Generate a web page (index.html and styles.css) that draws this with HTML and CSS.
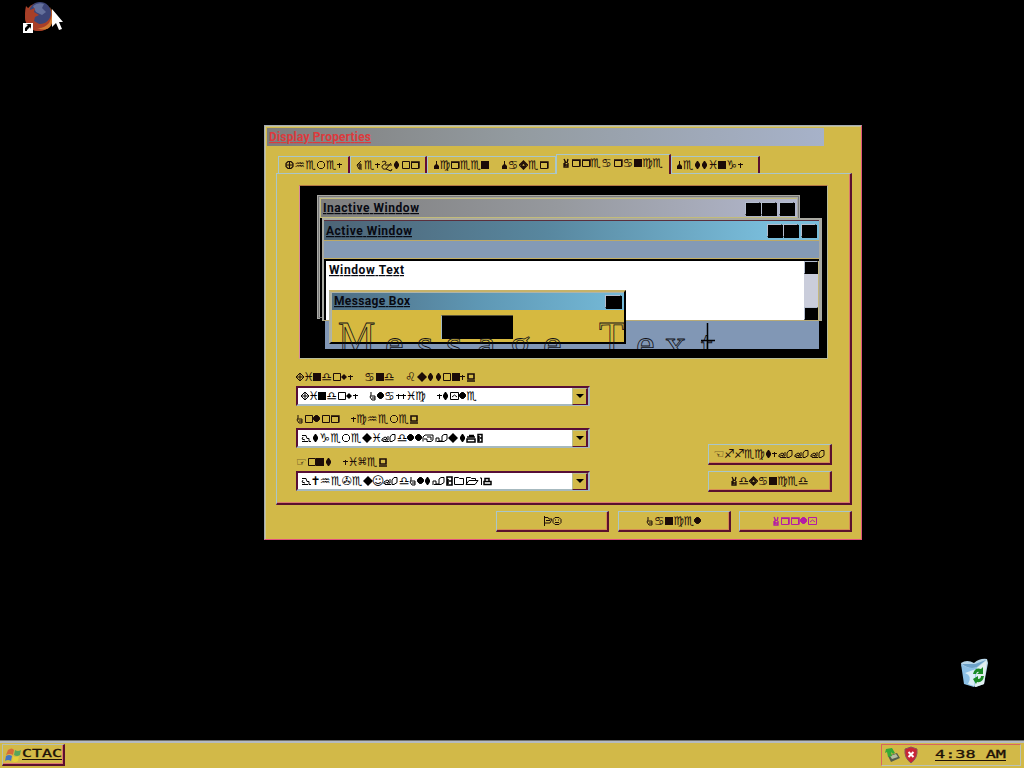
FILE: index.html
```html
<!DOCTYPE html>
<html lang="en">
<head>
<meta charset="utf-8">
<title>Desktop</title>
<link rel="stylesheet" href="styles.css">
</head>
<body>
<main class="desktop">
  <svg class="firefox" width="42" height="36" viewBox="0 0 42 36">
    <circle cx="17" cy="17" r="14" fill="#a94624"/>
    <circle cx="18" cy="13" r="11" fill="#3c4577"/>
    <path d="M11 6q5-4 11-2l-2 4 4 4-4 3-6-3z" fill="#64709c"/>
    <path d="M4 6l4 4 5-2-1 4 5 3-4 2-1 4 5 3q8 2 13-9 2 12-8 15-13 4-18-8-2-8 0-16z" fill="#a83f28"/>
    <path d="M28 7q4 8-1 16-5 6-12 5 15 6 16-11 0-6-3-10z" fill="#cf7a32"/>
    <path d="M1 23h10v10H1z" fill="#fff"/>
    <path d="M3 31v-3l3-3-2-1h5v5l-1-2-3 3v1z" fill="#000"/>
    <path d="M30 9v18l4-4 3 7 3-1-3-7h4z" fill="#fff"/>
  </svg>

  <section class="dialog">
    <header class="titlebar"><svg class="cap red" width="110" height="18"><text x="2" y="13" textLength="102">Display Properties</text></svg></header>
    <nav class="tabs">
      <div class="tab t1"><span class="sym" data-s="Themes"></span></div>
      <div class="tab t2"><span class="sym" data-s="Desktop"></span></div>
      <div class="tab t3"><span class="sym" data-s="Screen Saver"></span></div>
      <div class="tab t4"><span class="sym" data-s="Appearance"></span></div>
      <div class="tab t5"><span class="sym" data-s="Settings"></span></div>
    </nav>
    <div class="panel">
      <div class="preview">
        <div class="win inactive"><div class="bar"><svg class="cap" width="120" height="18"><text x="2" y="13" textLength="96">Inactive Window</text></svg><div class="boxes"><i></i><i></i><i></i></div></div></div>
        <div class="win active">
          <div class="bar"><svg class="cap" width="120" height="18"><text x="2" y="13" textLength="86">Active Window</text></svg><div class="boxes"><i></i><i></i><i></i></div></div>
          <div class="menu"></div>
          <div class="client"><svg class="cap" width="120" height="20"><text x="3" y="14" textLength="75">Window Text</text></svg><div class="scroll"><i></i><i></i></div></div>
        </div>
        <div class="below"></div>
        <div class="win message">
          <div class="bar"><svg class="cap" width="120" height="17"><text x="2" y="12" textLength="76">Message Box</text></svg><div class="boxes"><i></i></div></div>
          <div class="msgbody"><b></b></div>
        </div>
        <svg class="big" width="492" height="29"><text x="10" y="31">M</text><text x="57 89 118 149 182 215" y="38">essage</text><text x="271" y="31">T</text><text x="308 337" y="38">ex</text><text x="373" y="40">t</text><path d="M379.500 3v27M373 20.500h14"/></svg>
      </div>
      <div class="lower">
        <div class="fields">
          <label><span class="sym" data-s="Windows and Buttons:"></span></label>
          <div class="select"><span class="sym" data-s="Windows Classic style"></span><em></em></div>
          <label><span class="sym" data-s="Color scheme:"></span></label>
          <div class="select"><span class="sym" data-s="@tgemeui.dll,-ut8"></span><em></em></div>
          <label class="last"><span class="sym" data-s="Font size:"></span></label>
          <div class="select"><span class="sym" data-s="@UheVeuJ.dClt-2/016"></span><em></em></div>
        </div>
        <div class="side">
          <div class="btn"><span class="sym" data-s="Effects..."></span></div>
          <div class="btn"><span class="sym" data-s="Advanced"></span></div>
        </div>
      </div>
    </div>
    <footer class="actions">
      <div class="btn"><span class="sym" data-s="OK"></span></div>
      <div class="btn"><span class="sym" data-s="Cancel"></span></div>
      <div class="btn apply"><span class="sym" data-s="Apply"></span></div>
    </footer>
  </section>

  <svg class="bin" width="30" height="32" viewBox="0 0 30 32">
    <path d="M2 6q6-4 13 0 6-5 13-4l1 4-4 21-8 3-10-3z" fill="#b7d6e9"/>
    <path d="M3 7q8 6 15 3l9-7-11 4z" fill="#6da2c9"/>
    <path d="M2 7l3 20 10 3 3-20q-8 3-16-3z" fill="#8cc0e6"/>
    <path d="M6 16q8 3 3 11l6 2 2-17z" fill="#d9edf7"/>
    <path d="M18 11l10-8-3 24-9 3z" fill="#e2eff1"/>
    <path d="M14 17q2-7 8-5l2-2v7h-6l2-2q-2-1-3 2zM25 19q-1 7-7 6l-1 2-3-5 5-3v3q3 0 3-3z" fill="#198b25"/>
  </svg>
</main>
<footer class="taskbar">
  <div class="start">
    <svg width="17" height="18" viewBox="0 0 17 18"><path d="M3 4q4-3 6 0L8 9q-3-2-7 0z" fill="#d56c39"/><path d="M10 4q3 2 6 0l-1 5q-3 2-6 0z" fill="#58a55a"/><path d="M1 10q3-2 6 0l-1 5q-3-2-6 0z" fill="#4674c2"/><path d="M8 10q3 2 6 0l-1 5q-3 2-6 0z" fill="#e4cf3a"/></svg>
    <svg class="term" width="42" height="18"><text x="0" y="11" textLength="40" lengthAdjust="spacingAndGlyphs">CTAC</text><path d="M0 13.500h40"/></svg>
  </div>
  <div class="tray">
    <svg width="16" height="18" viewBox="0 0 16 18"><path d="M3 10l9-3 3 5-9 4z" fill="#545d4b"/><path d="M5 10l6-2 2 3-6 2z" fill="#b4bda0"/><path d="M1 3l6-1 3 5-2 1-2-2 1 4-4 1-1-5-2 1z" fill="#36a936"/></svg>
    <svg width="16" height="18" viewBox="0 0 16 18"><path d="M8 1l6 2q1 9-6 14-7-5-6-14z" fill="#c92537" stroke="#8b5558"/><path d="M5.500 6l5 5m0-5l-5 5" stroke="#fff" stroke-width="2"/></svg>
    <svg class="term clock" width="74" height="18"><text x="0" y="12" textLength="71" lengthAdjust="spacingAndGlyphs" xml:space="preserve">4:38 AM</text><path d="M0 14.500h71"/></svg>
  </div>
</footer>
<script src="symbols.js"></script>
</body>
</html>
```

FILE: styles.css
```css
* { box-sizing: border-box; }
body { margin: 0; width: 1024px; height: 768px; overflow: hidden; background: #000; display: flex; flex-direction: column; font-family: "Liberation Sans", sans-serif; }
svg { display: block; flex: none; }
.desktop { position: relative; height: 740px; }
.firefox { position: absolute; left: 22px; top: 0; }
.bin { position: absolute; left: 959px; top: 657px; }

.dialog { position: absolute; left: 264px; top: 125px; width: 598px; height: 415px; background: #d2b948; border: 1px solid; border-color: #a5abb3 #e0557c #e0557c #a5abb3; box-shadow: inset 1px 1px #cbc792; padding: 2px 9px 0 11px; }
.titlebar { height: 18px; width: 557px; margin-left: -9px; background: linear-gradient(90deg, #7e7d7c, #939ba0 45%, #a7b2c9); }
.cap text { font: bold 12px Roboto, "Liberation Sans", sans-serif; fill: #080a12; text-decoration: underline; }
.cap.red text { fill: #dd3a3d; }

.tabs { display: flex; align-items: flex-end; height: 27px; padding-left: 2px; }
.tab { height: 17px; border: 1px solid #a9c6cb; border-bottom: 0; display: flex; align-items: center; padding: 0 0 1px 6px; }
.t1 { width: 72px; border-right: 2px solid #650b35; }
.t2 { width: 77px; border-right: 2px solid #650b35; padding-left: 5px; }
.t3 { width: 129px; padding-left: 5px; }
.t4 { width: 115px; height: 20px; margin-bottom: -1px; position: relative; background: #d2b948; border-right: 2px solid #5b102e; padding-bottom: 4px; }
.t5 { width: 89px; border-right: 2px solid #5b102e; padding-left: 4px; }

.panel { height: 332px; border: 1px solid #a9c6cb; border-right: 2px solid #5b102e; border-bottom: 2px solid #5b102e; box-shadow: inset -1px -1px #dc7b6c; padding: 11px 0 0 22px; }
.preview { position: relative; width: 529px; height: 174px; background: #000; border: 1px solid; border-color: #b27545 #b7bc9a #b7bc9a #d8889a; overflow: hidden; }
.win { position: absolute; }
.bar { display: flex; justify-content: space-between; align-items: center; }
.boxes { display: flex; }
.boxes i, .scroll i { display: block; width: 15px; height: 13px; background: #000; border: 1px solid; border-color: #b4bdce #000 #000 #b4bdce; box-shadow: 1px 1px #000; margin-right: 1px; }
.boxes i:last-child { margin: 0 3px 0 2px; }
.inactive { left: 17px; top: 9px; width: 483px; height: 124px; border: 3px solid #a9a9a4; border-bottom: 0; outline: 1px solid #777; outline-offset: -2px; background: #000; }
.inactive .bar { height: 20px; background: linear-gradient(90deg, #7e7e7e, #96999e 50%, #b2b7cd); border: 1px solid #c2bb7a; border-right: 0; }
.active { left: 22px; top: 32px; width: 500px; height: 103px; background: #879bb5; border: 2px solid #a9aaa2; border-right-width: 3px; border-bottom: 1px solid #b8aa76; }
.active .bar { height: 21px; background: linear-gradient(90deg, #4d6476, #58879f 45%, #79bddb 90%); border-top: 1px solid #5b2f3c; border-bottom: 1px solid #bda965; }
.menu { height: 18px; background: #849ab5; border-bottom: 1px solid #c4ae61; }
.client { height: 61px; border-left: 2px solid #000; border-top: 2px solid #000; background: #fff; display: flex; justify-content: space-between; }
.client .cap { margin-top: -1px; }
.scroll { width: 15px; background: #cacddb; display: flex; flex-direction: column; justify-content: space-between; border-right: 1px solid #c4b77e; }
.scroll i { width: 14px; margin: 0; height: 13px; box-shadow: none; }
.below { position: absolute; left: 25px; top: 135px; width: 494px; height: 28px; background: #8197b5; }
.message { left: 29px; top: 104px; width: 297px; height: 54px; background: #d6b940; border: 2px solid; border-color: #c6b269 #000 #000 #b2b29c; padding-left: 1px; box-shadow: inset 1px 1px #aeb4aa; }
.message .bar { margin-top: 1px; height: 17px; background: linear-gradient(90deg, #4e6d83, #5e97b4 50%, #75bad8); }
.msgbody { padding: 5px 0 0 109px; }
.msgbody b { display: block; width: 72px; height: 24px; background: #000; border-left: 1px solid #a2b9c1; border-top: 1px solid #5c5538; }
.message .boxes i { width: 16px; }
.big { position: absolute; left: 28px; top: 134px; }
.big text { font: 42px "Liberation Serif", serif; fill: none; stroke: #111116; stroke-width: .8px; }
.big path { stroke: #000; fill: none; stroke-width: 1.500px; }

.lower { display: flex; justify-content: space-between; padding-right: 18px; margin-left: -3px; }
.fields { width: 294px; padding-top: 9px; }
.fields label { display: flex; align-items: center; height: 18px; }
.fields .last { height: 19px; }
.select { display: flex; align-items: center; justify-content: space-between; height: 20px; margin-bottom: 4px; background: #fff; border: 2px solid; border-color: #570f37 #a6b9bf #a6b9bf #570f37; padding-left: 3px; }
.select em { width: 16px; height: 17px; background: #d2b948; border: 1px solid; border-color: #b6bf90 #570f37 #570f37 #b6bf90; border-right-width: 2px; display: flex; align-items: center; justify-content: center; }
.select em::before { content: ""; border: 4px solid transparent; border-top-color: #000; border-bottom: 0; }
.side { width: 124px; padding-top: 85px; display: flex; flex-direction: column; gap: 6px; }
.btn { height: 21px; border: 1px solid; border-color: #a9c6cb #5b102e #5b102e #a9c6cb; border-right-width: 2px; border-bottom-width: 2px; box-shadow: inset -1px -1px #d68c55; display: flex; align-items: center; justify-content: center; }
.actions { display: flex; justify-content: flex-end; gap: 8px; margin-top: 6px; }
.actions .btn { width: 113px; }
.actions .btn:first-child { margin-right: 1px; }

.sym { display: flex; align-items: center; height: 14px; font: 12px/14px "DejaVu Sans", sans-serif; white-space: pre; color: #1c0c08; }
.select .sym { color: #000; }
.apply .sym { color: #b51ba5; }
.sym span { flex: none; display: flex; justify-content: center; height: 14px; }
.sym svg { margin-top: 2px; fill: none; stroke: currentColor; }
.sym .solid svg { fill: currentColor; stroke: none; }
.sym .mid { font-size: 10px; }

.taskbar { height: 28px; background: #d2b948; border-top: 1px solid #6f6f6b; box-shadow: inset 0 2px #b5bac0; display: flex; justify-content: space-between; padding: 3px 3px 2px 2px; }
.start { width: 63px; display: flex; align-items: center; border: 1px solid; border-color: #b7bfb2 #5b102e #5b102e #b7bfb2; border-right-width: 2px; border-bottom-width: 2px; padding-left: 2px; box-shadow: inset -1px -1px #dc776c; }
.tray { width: 140px; display: flex; align-items: center; padding-left: 3px; gap: 2px; border: 1px solid; border-color: #d8655d #b9c3b9 #b9c3b9 #d8655d; }
.term text { font: 11px "DejaVu Sans Mono", monospace; fill: #1d1007; stroke: #1d1007; stroke-width: .3px; }
.term path { stroke: #1d1007; }
.clock { margin-left: 14px; }
```

FILE: symbols.js
```js
// Symbol-font table: letter -> [glyph or drawing, advance, class]
const table = {
  T: ['<path d="M3 1.500h3l2 2v3l-2 2H3l-2-2v-3zM4.500 2v7M1 5h7" stroke-width="1.200"/>', 9],
  h: ["♒", 11.5], e: ["♏", 10.5],
  m: ['<path d="M3.500 1.500h3l2 2v3l-2 2h-3l-2-2v-3z"/>', 10],
  s: ['<path d="M2 3h1v1h2v1H3v3H2V5H0V4h2z"/>', 5.5, "solid"],
  k: ['<path d="M2 2q4-2 4 1L2 6q0 4 4 3l5-6M5 5h7M6 9l5 2 1-2"/>', 13],
  t: ['<path d="M3 1h1l2 3v2L4 9H3L1 6V4z"/>', 7.5, "solid"],
  o: ['<path d="M1.500 1.500h7v7h-7z"/>', 9.5],
  p: ['<path d="M1.500 2.500h7v6h-7z"/><path d="M1 2h8v6.500" stroke-width="1.500"/>', 10],
  r: ['<path d="M1.500 2.500h7v6h-7z"/><path d="M1 2h8v6.500" stroke-width="1.300"/>', 10],
  c: ["♍", 10], n: ['<path d="M0 1h8v8H0z"/>', 8.5, "solid"], a: ["♋", 11.5],
  v: ['<path d="M4.500 1l4 4-4 4-4-4zM4.500 3l2 2-2 2-2-2z" stroke-width="1.300"/>', 9], i: ["♓", 9],
  g: ["♑", 11.5], d: ["♎", 10],
  w: ['<path d="M3 2l3 3-3 3-3-3z"/>', 6.5, "solid"],
  W: ['<path d="M4 1l4 4-4 4-4-4zM4 1v8M0 5h8"/>', 8],
  l: ['<path d="M2.500 1.500h2l2 2v2l-2 2h-2l-2-2v-2z" stroke="currentColor"/>', 7.5, "solid"],
  y: ['<path d="M.5 1.500h8v7h-8zM2 6l2.500-2L7 6"/>', 9.5],
  u: ['<path d="M5 0l5 5-5 5-5-5z"/>', 10.5, "solid"],
  z: ["⌘", 9.5, "mid"],
  F: ["☞", 10.5], E: ["☜", 10.5], f: ["♐", 10], B: ["♌", 11.5],
  U: ["✝", 8], V: ["✇", 10.5], J: ["☺", 10], " ": [" ", 11],
  S: ['<path d="M3 1h1v3l2 2v3H1V6l2-2z"/>', 7, "solid"],
  D: ['<path d="M5 1L1 5l2 4h3M2 5h4M3 7h3M4 3v6"/>', 8],
  C: ['<path d="M2 1v3L1 6l2 3h3V5H2M3 7h3"/>', 7.5],
  A: ['<path d="M1 1l2 4M5 1L4 5M1 5v4h4V5M2 7h3M2 3v5" stroke-width="1.300"/>', 7.5],
  ":": ['<path d="M2 2h6v5H2zM1 9h8" stroke-width="1.600"/>', 10],
  "@": ['<path d="M1 2.500h4l1 3h2v3h2M2 4l-1 2 3 1M1 8.500h6"/>', 10.5],
  ".": ['<path d="M1 6l3-2 2 1-2 2h3V3M2 8.500h6M1 6v2l3-2M9 8.500V4l2-2.500h3v5l-3 2z"/>', 16],
  ",": ['<path d="M1 8.500V4l2-2h8v5l-2 1.500H5V6H2M5 4h4v3"/>', 13],
  "-": ['<path d="M1 9V5h3v3h3V3l2-1.500h3v5L9 8.500H2"/>', 13],
  8: ['<path d="M1 4h8M1 6h8v3H1zM3 2.500h5M12 1.500h4V9h-4zM13 3v5M14 5h2v3" stroke-width="1.500"/>', 18],
  2: ['<path d="M2 1h5v8H2zM3 3v5M4 5h3v3" stroke-width="1.600"/>', 8],
  "/": ['<path d="M1.500 8.500v-7h4l1 1h4v6z"/>', 12],
  0: ['<path d="M1.500 8.500v-7h4l1 1h4v2M1 8.500l3-4h9l-3 4z"/>', 14],
  1: ['<path d="M1 2h1.500v7"/>', 4],
  6: ['<path d="M1 5.500h7v3H1zM2 5V2.500h4V5" stroke-width="1.500"/>', 10],
  O: ['<path d="M1.500 0v10M2 1.500h3l1 1.500h3L7 7H2M3 4.500h4"/>', 9],
  K: ['<path d="M3 1.500h4l2 2v3l-2 2H3l-2-2v-3zM3 6.500h4M3 4h1M6 4h1"/>', 10]
};
document.querySelectorAll(".sym").forEach(line => {
  for (const letter of line.dataset.s) {
    const [mark, advance, kind] = table[letter];
    const cell = document.createElement("span");
    cell.style.width = advance + "px";
    if (kind) cell.className = kind;
    cell.innerHTML = mark.startsWith("<path")
      ? `<svg width="${advance}" height="12">${mark}</svg>` : mark;
    line.append(cell);
  }
});
```
